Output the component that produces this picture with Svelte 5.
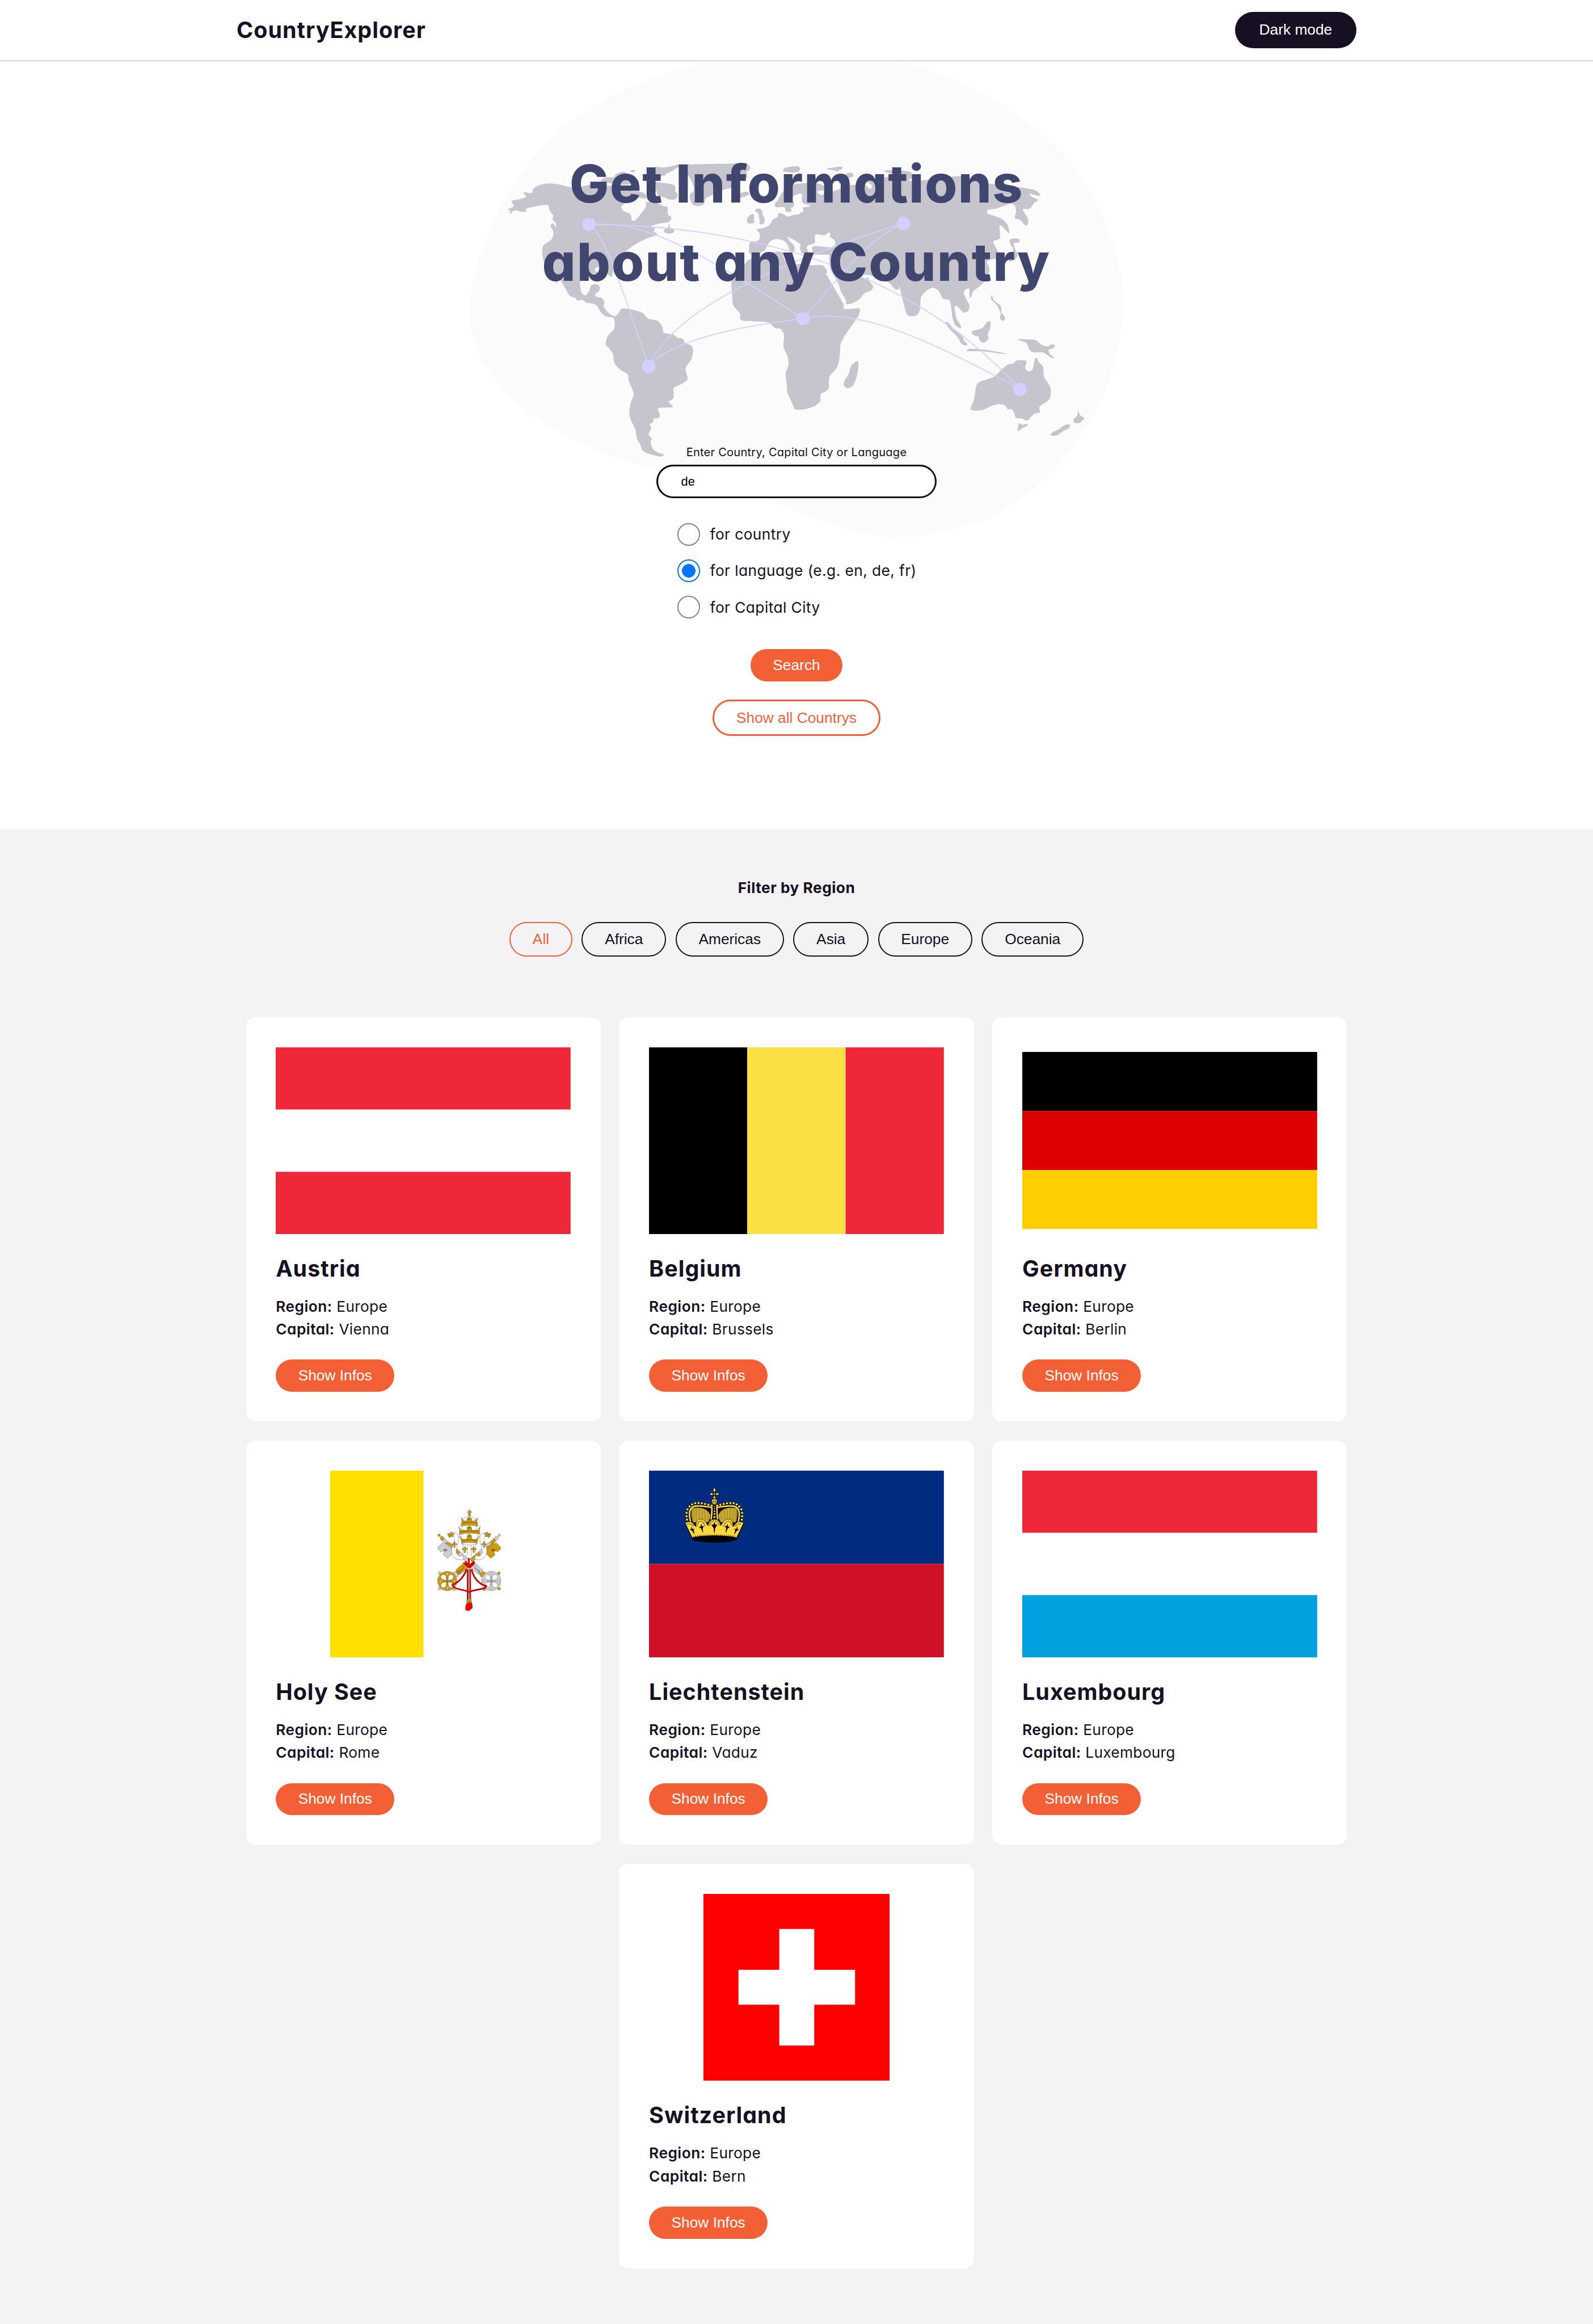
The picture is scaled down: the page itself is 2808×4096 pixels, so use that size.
<script>
  const countries = [
    { name: 'Austria', capital: 'Vienna', flag: { w: 316, h: 200, dir: 'rows', stripes: ['#ee2839', '#ffffff', '#ee2839'] } },
    { name: 'Belgium', capital: 'Brussels', flag: { w: 316, h: 200, dir: 'cols', stripes: ['#000000', '#fae042', '#ee2839'] } },
    { name: 'Germany', capital: 'Berlin', flag: { w: 316, h: 190, dir: 'rows', stripes: ['#000000', '#dd0000', '#ffce00'] } },
    { name: 'Holy See', capital: 'Rome', flag: { kind: 'vatican' } },
    { name: 'Liechtenstein', capital: 'Vaduz', flag: { kind: 'liechtenstein' } },
    { name: 'Luxembourg', capital: 'Luxembourg', flag: { w: 316, h: 200, dir: 'rows', stripes: ['#ee2839', '#ffffff', '#00a1de'] } },
    { name: 'Switzerland', capital: 'Bern', flag: { kind: 'swiss' } }
  ];
  const regions = ['All', 'Africa', 'Americas', 'Asia', 'Europe', 'Oceania'];
  const modes = ['for country', 'for language (e.g. en, de, fr)', 'for Capital City'];

  let region = $state('All');
  let mode = $state(modes[1]);
  let query = $state('de');

  // Parses "x,y x,y ..." and moves the points by (dx, dy) after scaling.
  function pts(text, dx = 0, dy = 0, sx = 1, sy = 1) {
    return text.trim().split(/\s+/).map((p) => {
      const [x, y] = p.split(',').map(Number);
      return [x * sx + dx, y * sy + dy];
    });
  }
  // Closed, softly rounded outline through the points.
  function smooth(p, k = 0.14) {
    const n = p.length;
    let d = `M${p[0][0].toFixed(1)} ${p[0][1].toFixed(1)}`;
    for (let i = 0; i < n; i++) {
      const a = p[(i + n - 1) % n], b = p[i], c = p[(i + 1) % n], e = p[(i + 2) % n];
      const v = [b[0] + (c[0] - a[0]) * k, b[1] + (c[1] - a[1]) * k, c[0] - (e[0] - b[0]) * k, c[1] - (e[1] - b[1]) * k, c[0], c[1]];
      d += 'C' + v.map((q) => q.toFixed(1)).join(' ');
    }
    return d + 'Z';
  }
  const west = (t) => pts(t);
  const east = (t) => pts(t, 1475.8, 0);
  const europe = (t) => pts(t, 1106.8, 345, 0.6149, 0.5227);

  const land = [
    west('231,572 257,560 246,541 280,534 311,525 300,508 337,510 342,496 365,482 410,474 460,478 515,489 560,485 600,478 640,482 700,484 770,492 838,512 842,530 800,530 750,550 735,562 745,578 776,590 782,614 800,611 830,580 845,560 845,545 880,545 925,560 940,563 942,590 958,603 945,620 915,624 870,634 885,642 880,655 895,668 845,683 790,708 740,742 708,775 700,800 697,815 690,828 672,815 658,793 640,789 622,793 618,804 640,815 600,815 560,822 551,850 557,885 575,897 592,880 600,860 625,855 640,868 634,882 618,893 625,902 650,908 660,925 656,940 680,965 705,976 722,965 735,948 765,948 825,962 855,985 895,993 915,1012 925,1038 965,1045 985,1058 1010,1062 1018,1078 1045,1086 1054,1105 1046,1140 1022,1168 1022,1185 1029,1215 1000,1233 968,1247 968,1265 966,1285 945,1300 955,1308 962,1320 900,1324 907,1350 898,1361 878,1363 876,1376 861,1385 868,1400 856,1423 870,1438 865,1455 878,1480 900,1492 923,1498 912,1507 860,1497 830,1484 822,1467 803,1435 798,1405 777,1368 770,1340 776,1305 790,1272 785,1255 768,1220 762,1195 725,1175 703,1150 698,1120 680,1097 665,1082 675,1050 700,1027 705,1005 700,982 665,976 645,962 625,935 610,929 580,925 565,915 540,916 530,907 505,898 480,862 462,838 445,835 447,852 420,815 395,780 384,745 386,712 410,695 428,680 432,655 420,635 430,625 445,638 443,624 430,610 432,595 415,575 410,557 380,557 315,568 312,580 290,581 270,577 252,579 240,591 240,578'),
    west('645,465 665,452 700,450 712,438 745,430 765,445 776,475 730,478'),
    west('775,427 785,423 798,425 786,432'),
    west('868,470 905,470 970,480 975,503 985,515 978,532 950,535 920,525 900,520 888,500 868,500'),
    west('868,420 890,411 925,414 960,408 1000,401 1040,402 1035,409 990,412 965,425 935,437 925,445 880,448'),
    west('1040,405 1060,402 1160,400 1260,398 1295,401 1308,412 1303,424 1292,430 1295,450 1262,460 1252,480 1240,487 1190,498 1125,523 1110,530 1102,552 1080,559 1055,555 1043,540 1040,515 1058,500 1050,470 1030,442 1000,435 1010,415'),
    west('948,624 952,640 970,650 966,660 945,664 926,658 926,648 942,640'),
    europe('215,362 232,335 275,310 310,308 320,325 290,342 250,352'),
    europe('320,750 318,720 322,685 335,667 380,662 398,635 392,602 375,585 380,575 430,567 470,545 485,515 495,505 525,490 533,462 560,465 600,486 640,474 680,470 697,453 712,453 710,422 735,418 765,408 710,390 700,365 700,322 670,325 620,352 645,385 640,415 622,425 625,448 585,450 575,420 515,418 505,395 530,365 560,310 610,268 660,250 760,243 835,252 880,290 812,305 840,330 900,310 930,303 970,288 1000,270 1060,257 1120,258 1165,262 1190,285 1207,275 1200,250 1170,232 1250,208 1340,200 1450,215')
      .concat(east('555,466 620,460 700,452 740,447 790,448 820,457 900,475 960,478 1000,485 1090,497 1118,512 1118,521 1075,513 1085,524 1112,535 1105,543 1095,548 1075,570 1045,572 1068,608 1066,628 1055,632 1035,613 1010,605 1015,580 1010,560 995,550 970,556 930,568 890,574 888,588 920,597 950,607 978,632 984,662 965,647 942,632 943,680 915,692 918,705 930,725 940,755 910,760 885,770 897,800 880,838 850,865 825,880 815,903 808,903 807,872 790,875 783,892 805,930 806,950 790,962 775,958 758,942 742,940 750,985 768,1010 768,1022 745,1010 732,980 725,935 717,914 690,910 670,880 645,868 615,880 592,905 588,945 578,968 555,976 530,970 518,940 497,866 492,876 475,872 450,850 400,830 345,818 328,828 345,835 358,828 360,842 378,860 372,877 340,890 320,910 290,926 260,930 258,915 235,882 228,860 210,830 190,800 185,770 184,748 175,743 110,743'))
      .concat(europe('790,758 778,730 775,708 800,700 880,707 925,705 943,675 935,655 905,632 908,608 895,602 862,622 815,614 797,622 795,645 797,668 785,682 745,695 738,718 748,742 730,760 702,752 688,720 690,688 660,665 600,633 610,660 640,690 650,720 640,745 615,735 600,695 570,662 530,650 490,655 460,680 440,720 410,745 360,752')),
    europe('193,940 240,890 305,810 345,788 430,770 520,740 560,748 570,785 590,815 640,832 700,828 760,838 845,838 872,860 888,897 873,895 905,950 1000,1115 1000,1140 1012,1155 1070,1153 1110,1148 1121,1165 1110,1205')
      .concat(east('300,993 262,1038 235,1080 230,1130 218,1170 188,1200 182,1225 182,1248 168,1260 146,1270 144,1295 120,1315 70,1328 32,1328 22,1310 -2,1265 -5,1235'))
      .concat(west('1466,1195 1478,1160 1475,1130 1456,1090 1459,1050 1445,1025 1418,1021 1390,1000 1330,995 1268,991 1262,965 1233,935 1228,900')),
    east('305,1146 314,1153 310,1190 300,1220 285,1242 262,1247 248,1235 255,1215 270,1195 280,1165 295,1152'),
    europe('345,468 357,474 352,488 360,498 353,508 357,522 350,534 315,536 305,522 310,495 325,475'),
    europe('366,434 385,428 408,435 415,455 417,475 431,495 430,520 422,540 405,543 392,535 397,518 392,500 390,480 387,465 368,452'),
    europe('565,150 580,135 620,125 675,123 688,140 680,158 640,167 575,162'),
    europe('878,142 920,133 980,124 997,130 985,145 970,150 960,161 935,152'),
    europe('965,238 1000,200 1020,178 1055,168 1075,182 1065,200 1040,206 1010,215 985,247'),
    europe('1300,153 1400,153 1480,162 1503,185 1485,215 1450,220 1400,190 1330,172'),
    east('700,1002 712,999 740,1025 772,1045 785,1070 799,1080 790,1087 770,1078 755,1055 720,1025'),
    east('818,1033 835,1028 865,1020 885,998 900,996 900,1020 889,1045 892,1062 870,1076 852,1065 848,1053 825,1047'),
    east('798,1102 815,1099 880,1103 967,1117 960,1119 880,1109 803,1108'),
    east('908,895 915,915 935,928 948,940 950,960 966,980 962,991 950,992 943,980 946,965 930,935 904,912'),
    east('1022,1063 1060,1063 1100,1066 1130,1085 1155,1090 1175,1082 1187,1088 1180,1097 1160,1103 1165,1118 1186,1134 1170,1132 1135,1113 1090,1112 1072,1098 1062,1078'),
    east('986,688 1005,682 1030,685 1026,697 1005,700 1010,720 1022,740 1015,758 985,770 990,745 1003,725 988,700'),
    east('813,1328 828,1290 838,1240 855,1223 915,1205 945,1182 975,1160 1000,1155 1020,1143 1055,1143 1061,1152 1055,1172 1070,1184 1088,1177 1098,1140 1107,1133 1115,1148 1135,1168 1140,1205 1165,1240 1170,1265 1160,1292 1120,1318 1121,1340 1095,1345 1065,1370 1040,1362 1015,1360 1005,1340 995,1328 978,1327 965,1313 940,1308 905,1315 860,1332'),
    east('1028,1380 1042,1386 1065,1383 1062,1392 1045,1398 1022,1410'),
    east('1290,1331 1300,1350 1318,1362 1308,1370 1300,1379 1275,1379 1270,1368 1288,1350'),
    east('1250,1385 1253,1397 1225,1410 1195,1427 1168,1425 1180,1413 1200,1406 1230,1388')
  ].map((p) => smooth(p));

  const blob = smooth(pts('62,975 75,850 115,730 190,575 300,425 400,320 520,235 720,132 930,60 1140,8 1400,-45 1700,-45 1976,10 2230,85 2476,200 2676,345 2800,470 2876,600 2945,760 2967,960 2915,1192 2815,1380 2650,1565 2426,1714 2232,1777 1990,1811 1800,1795 1650,1756 1372,1665 1130,1598 873,1550 690,1502 524,1443 370,1368 240,1280 130,1165 80,1065'), 0.167);

  const routes = [
    'M590 629C650 640 760 920 856 1166',
    'M590 629C800 615 1000 680 1543 985',
    'M590 629C1200 630 1990 760 2508 1252',
    'M856 1166C960 960 1400 780 1989 625',
    'M856 1166C960 1060 1300 1010 1543 985',
    'M1543 985C1700 840 1800 700 1989 625',
    'M1543 985C1780 940 2100 1060 2508 1252'
  ];
  const cities = [[590, 629], [856, 1166], [1543, 985], [1989, 625], [2508, 1252]];

  const keys = [
    { id: 'gold', turn: 'translate(782 0) scale(-1 1)' },
    { id: 'silver', turn: '' }
  ];
  const ropes = [
    'M380 545V765', 'M398 545V765', 'M388 465V520L362 488M390 520L428 488M350 498L392 535L430 500',
    'M372 545C350 610 300 650 270 655C270 690 340 690 390 708C440 690 515 690 515 665C470 660 420 610 408 545'
  ];
  // Left half of the princely crown's pearls; the right half is its mirror.
  const pearls = [[110, 306], [107, 282], [107, 257], [113, 232], [128, 211], [147, 196], [169, 187], [193, 186], [217, 188], [241, 193], [265, 199], [288, 205]];
  const bars = [148, 158, 168, 179, 190, 201, 212, 223, 234, 245, 256, 267];
</script>

{#snippet pips()}
  {#each pearls as [x, y]}<circle cx={x} cy={y} r="9.5" />{/each}
{/snippet}

<header>
  <div class="bar">
    <div class="logo">CountryExplorer</div>
    <button class="btn dark">Dark mode</button>
  </div>
</header>

<main>
  <section class="hero">
    <svg class="world" viewBox="0 10 3043.7 1871.6" preserveAspectRatio="none" aria-hidden="true">
      <path class="blob" d={blob} />
      {#each land as d}<path class="land" {d} />{/each}
      {#each routes as d}<path class="route" {d} />{/each}
      {#each cities as [x, y]}<ellipse class="city" cx={x} cy={y} rx="29.5" ry="25" />{/each}
    </svg>

    <h1><span class="l1">Get Informations</span><br /><span class="l2">about any Country</span></h1>

    <label class="hint" for="query">Enter Country, Capital City or Language</label>
    <input id="query" class="query" type="text" bind:value={query} />

    <div class="modes">
      {#each modes as m}
        <label class="mode">
          <input type="radio" name="mode" value={m} bind:group={mode} />
          <span>{m}</span>
        </label>
      {/each}
    </div>

    <button class="btn solid">Search</button>
    <button class="btn ghost">Show all Countrys</button>
  </section>

  <section class="results">
    <h2>Filter by Region</h2>
    <div class="pills">
      {#each regions as r}
        <button class="pill" class:active={region === r} onclick={() => (region = r)}>{r}</button>
      {/each}
    </div>

    <div class="cards">
      {#each countries as c}
        <article class="card">
          <div class="flag">
            {#if c.flag.stripes}
              <svg viewBox="0 0 {c.flag.w} {c.flag.h}" class:short={c.flag.h === 190} preserveAspectRatio="none">
                {#each c.flag.stripes as fill, i}
                  {#if c.flag.dir === 'rows'}
                    <rect x="0" y={(i * c.flag.h) / 3} width={c.flag.w} height={c.flag.h / 3} {fill} />
                  {:else}
                    <rect x={(i * c.flag.w) / 3} y="0" width={c.flag.w / 3} height={c.flag.h} {fill} />
                  {/if}
                {/each}
              </svg>
            {:else if c.flag.kind === 'swiss'}
              <svg class="square" viewBox="0 0 32 32">
                <rect width="32" height="32" fill="#ff0000" />
                <path d="M13 6h6v7h7v6h-7v7h-6v-7H6v-6h7z" fill="#fff" />
              </svg>
            {:else if c.flag.kind === 'liechtenstein'}
              <svg viewBox="-165 -48 2133 1350" preserveAspectRatio="none">
                <rect x="-165" y="-48" width="2133" height="675" fill="#002b7f" />
                <rect x="-165" y="627" width="2133" height="675" fill="#ce1126" />
                <g class="crown">
                  <path class="ink" d="M95 332L125 320C120 260 130 215 185 202C240 195 285 215 308 205C330 215 380 195 430 202C490 215 498 260 492 320L522 332L472 440C470 480 150 480 145 440Z" />
                  {@render pips()}
                  <g transform="translate(616 0) scale(-1 1)">{@render pips()}</g>
                  <path class="cap" d="M145 225C190 212 250 215 278 268C280 290 275 310 262 326H152C138 290 138 250 145 225ZM471 225C426 212 366 215 338 268C336 290 341 310 354 326H464C478 290 478 250 471 225Z" />
                  <g class="rib">
                    {#each bars as x}<path d="M{x} 218V322M{616 - x} 218V322" />{/each}
                  </g>
                  <path class="ink" d="M225 215C262 222 278 245 286 270V222ZM391 215C354 222 338 245 330 270V222Z" />
                  <path class="arch" d="M135 322C122 260 125 222 165 210C210 200 262 216 290 218C290 260 288 285 284 306M481 322C494 260 491 222 451 210C406 200 354 216 326 218C326 260 328 285 332 306" />
                  <path class="ink" d="M298 214h20v92h-20z" />
                  {#each [211, 226, 245, 265, 288] as y, i}<circle cx="308" cy={y} r={5.5 + i} />{/each}
                  <path d="M96 330C118 316 146 318 160 342L175 358C170 320 188 300 208 302C232 302 246 325 262 350C266 318 284 304 308 304C332 304 350 318 354 350C370 325 384 302 408 302C428 300 446 320 441 358L456 342C470 318 498 316 520 330L468 438C440 420 176 420 148 438Z" />
                  <ellipse class="ink" cx="308" cy="446" rx="161" ry="25" />
                  <path class="fringe" d="M156 430C220 416 396 416 460 430" />
                  <path class="studs" d="M112 338Q140 332 158 356M184 352Q186 316 210 318Q230 320 240 356M274 348Q276 318 308 316Q340 318 342 348M376 356Q386 320 406 318Q430 316 432 352M458 356Q476 332 504 338" />
                  <path class="ink" d="M308 326L314 345L328 342L320 356L312 368L308 402L304 368L296 356L288 342L302 345ZM214 340L218 356L230 354L222 368L224 398L214 370L198 360L210 357ZM402 340L398 356L386 354L394 368L392 398L402 370L418 360L406 357ZM144 360L148 376L161 374L156 386L163 410L148 388L132 376L142 376ZM472 360L468 376L455 374L460 386L453 410L468 388L484 376L474 376Z" />
                  <circle cx="308" cy="175" r="21" />
                  <path class="line" d="M288 176H328M288 184H328M302 156V174M314 156V174" />
                  <path d="M308 72L318 93L308 113L298 93ZM270 121L289 111L301 121L289 131ZM346 121L327 111L315 121L327 131ZM308 128L320 153H296Z" />
                  <circle cx="308" cy="121" r="7" />
                </g>
              </svg>
            {:else}
              <svg class="square" viewBox="-615 -168 1350 1350">
                <rect x="-615" y="-168" width="676" height="1350" fill="#ffe000" />
                <rect x="61" y="-168" width="674" height="1350" fill="#fff" />
                <g class="arms">
                  <path class="white" d="M345 365C352 420 345 455 318 475C340 480 375 462 378 430V368ZM437 365C430 420 437 455 464 475C442 480 407 462 404 430V368Z" />
                  {#each keys as k}
                    <g class={k.id} transform={k.turn}>
                      <path class="main" d="M198 352L165 385V400L180 408L184 420L200 412L212 424L204 440L235 466L264 437V396L222 350L212 362Z" />
                      <path class="mark" d="M218 392V420M205 398Q205 412 218 406Q231 412 231 398M206 408H230" />
                      <path class="main" d="M212 322L272 378L255 396L197 338Z" />
                      <path class="alt" d="M180 312L198 306L212 322L197 340L184 330ZM217 352L258 356L276 380L262 384L236 366ZM290 398L304 398L328 424V438L312 440L288 412Z" />
                      <circle class="alt" cx="173" cy="299" r="9" />
                      <path class="main" d="M322 420L386 470L372 494L310 440Z" />
                      <path class="main" d="M404 520L432 500L484 546Q492 556 482 574Q470 588 458 582L404 538Z" />
                      <path class="mark" d="M425 520Q440 530 436 545Q450 540 452 556Q470 548 466 566M470 560a8 8 0 1 0 6 8" />
                      <path class="alt" d="M488 562L506 566L505 580L484 600L470 596L472 582Z" />
                      <circle class="alt" cx="605" cy="574" r="10" />
                      <circle class="alt" cx="607" cy="686" r="10" />
                      <circle class="alt" cx="500" cy="690" r="10" />
                      <circle class="main" cx="550" cy="630" r="70" />
                      <path class="white" d="M545 626C505 625 495 595 515 585C538 578 546 600 545 626ZM555 626C554 600 562 578 585 585C608 595 595 625 555 626ZM555 636C595 637 608 665 585 677C562 684 554 660 555 636ZM545 636C546 660 538 684 515 677C492 665 505 637 545 636ZM538 574H562L550 588ZM538 686H562L550 674ZM494 620V642L507 631ZM606 620V642L593 631Z" />
                      <path class="ink" d="M550 600V660M520 631H580" />
                      <circle class="main" cx="550" cy="612" r="8" />
                      <circle class="main" cx="550" cy="649" r="8" />
                      <circle class="main" cx="531" cy="631" r="8" />
                      <circle class="main" cx="569" cy="631" r="8" />
                    </g>
                  {/each}
                  {#each keys as k}
                    <g transform={k.turn} class="gold">
                      <path class="white" d="M240 290C262 268 312 275 314 320C316 360 290 400 298 430C304 458 330 455 344 440L352 470C330 484 285 478 268 440C250 396 290 350 285 318C278 300 262 300 252 312Z" />
                      <path class="main" d="M233 290L246 284L260 308L246 317ZM258 278h10v8h14v10h-10l2 14h-10l-2-12-10 2-2-10 9-3ZM280 346h9v14h12v9h-12v19h-9v-19h-12v-9h12ZM355 382h9v12h12v9h-12v22h-9v-22h-14v-9h14Z" />
                    </g>
                  {/each}
                  <g class="gold">
                    <path class="white" d="M346 200C346 150 438 150 438 200L452 300L447 366Q391 374 337 366L332 300Z" />
                    <path class="main" d="M335 172L350 192L362 196L372 196Q378 180 392 168Q406 180 412 196L424 196L436 192L450 172L447 200L454 234Q391 218 330 234L338 200Z" />
                    <path class="main" d="M315 235L330 262L348 262Q360 262 372 264Q378 244 392 232Q406 244 412 264L438 262L454 262L470 235L465 268L468 292Q391 276 318 294L322 268Z" />
                    <path class="main" d="M317 302L336 324L352 330L372 328Q378 308 392 292Q406 308 412 328L434 330L448 324L467 302L452 330L446 358Q391 344 338 358L332 330Z" />
                    <path class="mark" d="M336 212Q391 198 448 212M322 274Q391 262 464 274M336 340Q391 326 448 340" />
                    {#each [182, 246, 306] as y}
                      <circle class="main" cx="392" cy={y - 8} r="7" />
                      <circle class="main" cx="382" cy={y} r="7" />
                      <circle class="main" cx="402" cy={y} r="7" />
                    {/each}
                    <circle class="main" cx="392" cy="150" r="9" />
                    <path class="main" d="M389 115h7v12h12v8h-12v8h-7v-8h-11v-8h11Z" />
                  </g>
                  {#each ropes as d}
                    <path class="rope-edge" {d} />
                    <path class="rope" {d} />
                  {/each}
                  <g class="gold">
                    <path class="main" d="M374 766H387L390 788H372ZM392 758H405L408 784H390Z" />
                  </g>
                  <path class="tassel" d="M390 786H408Q418 810 412 830Q400 836 392 830Z" />
                  <path class="tassel" d="M373 790H390Q402 815 398 840Q382 850 365 840Q360 815 373 790Z" />
                </g>
              </svg>
            {/if}
          </div>
          <h3>{c.name}</h3>
          <p><b>Region:</b> Europe</p>
          <p><b>Capital:</b> {c.capital}</p>
          <button class="btn solid">Show Infos</button>
        </article>
      {/each}
    </div>
  </section>
</main>

<style>
  :global(html) {
    font-size: 16.449px;
  }
  :global(body) {
    margin: 0;
    background: #fff;
    color: #170f22;
    font-family: Inter, 'Open Sans', sans-serif;
    font-feature-settings: 'cv11' 1;
  }
  header {
    box-sizing: border-box;
    height: 6.54rem;
    border-bottom: 0.13rem solid #d6d6e6;
    background: #fff;
    position: relative;
    z-index: 1;
  }
  .bar {
    width: 120rem;
    height: 100%;
    margin: 0 auto;
    display: flex;
    align-items: center;
    justify-content: space-between;
  }
  .logo {
    font-size: 2.4rem;
    font-weight: 700;
    letter-spacing: 0.025em;
  }
  .btn {
    box-sizing: border-box;
    height: 3.46rem;
    padding: 0 2.4rem;
    border: 0;
    border-radius: 2rem;
    font: 400 1.6rem 'Liberation Sans', Arial, sans-serif;
    white-space: nowrap;
  }
  .dark {
    height: 3.86rem;
    padding: 0 2.6rem;
    background: #170f22;
    color: #fff;
  }
  .solid {
    background: #f46036;
    color: #fff;
  }
  .ghost {
    height: 3.87rem;
    margin-top: 1.98rem;
    border: 0.19rem solid #f46036;
    background: #fff;
    color: #f46036;
  }
  .hero {
    position: relative;
    box-sizing: border-box;
    height: 82.26rem;
    padding-top: 8.96rem;
    display: flex;
    flex-direction: column;
    align-items: center;
  }
  .hero > :not(.world) {
    position: relative;
  }
  .world {
    position: absolute;
    top: -0.04rem;
    left: 48.89rem;
    width: 73.33rem;
    height: 53.05rem;
  }
  .blob {
    fill: #fbfbfb;
  }
  .land {
    fill: #c6c4cd;
  }
  .route {
    fill: none;
    stroke: #d3d1ff;
    stroke-width: 4.5;
    opacity: 0.9;
  }
  .city {
    fill: #d2d0ff;
  }
  h1 {
    margin: 0;
    text-align: center;
    font-size: 5.6rem;
    line-height: 8.4rem;
    font-weight: 800;
    color: #41466f;
  }
  .l1 {
    letter-spacing: 0.02em;
  }
  .l2 {
    letter-spacing: 0.026em;
  }
  .hint {
    margin-top: 15.3rem;
    font-size: 1.22rem;
    line-height: 1.8rem;
    letter-spacing: 0.012em;
  }
  .query {
    box-sizing: border-box;
    width: 30rem;
    height: 3.54rem;
    margin-top: 0.42rem;
    padding: 0 2.45rem;
    border: 0.19rem solid;
    border-color: #000 #170f22 #170f22 #000;
    border-radius: 1.8rem;
    background: #fff;
    color: #000;
    outline: none;
    font: 400 1.333rem 'Liberation Sans', Arial, sans-serif;
  }
  .modes {
    width: 25.5rem;
    margin-top: 2.7rem;
    display: flex;
    flex-direction: column;
    gap: 1.5rem;
  }
  .mode {
    display: flex;
    align-items: center;
    gap: 1.08rem;
    height: 2.4rem;
    font-size: 1.6rem;
    letter-spacing: 0.016em;
    white-space: nowrap;
  }
  .mode input {
    appearance: none;
    box-sizing: border-box;
    flex: none;
    width: 2.4rem;
    height: 2.4rem;
    margin: 0;
    border: 0.125rem solid #858585;
    border-radius: 50%;
    background: #fff;
  }
  .mode input:checked {
    border-color: #0075ff;
    background: radial-gradient(circle, #0075ff 0 0.7rem, #fff 0.75rem);
  }
  .hero > .solid {
    margin-top: 3.28rem;
  }
  .results {
    box-sizing: border-box;
    height: 160.22rem;
    padding-top: 5.12rem;
    background: #f3f3f3;
    display: flex;
    flex-direction: column;
    align-items: center;
  }
  h2 {
    margin: 0;
    font-size: 1.6rem;
    line-height: 2.4rem;
    letter-spacing: 0.018em;
  }
  .pills {
    display: flex;
    gap: 1rem;
    margin-top: 2.48rem;
  }
  .pill {
    box-sizing: border-box;
    height: 3.68rem;
    padding: 0 2.36rem;
    border: 0.125rem solid #170f22;
    border-radius: 2rem;
    background: none;
    color: #170f22;
    font: 400 1.6rem 'Liberation Sans', Arial, sans-serif;
  }
  .pill.active {
    border-color: #f46036;
    color: #f46036;
  }
  .cards {
    width: 120rem;
    margin-top: 6.53rem;
    display: flex;
    flex-wrap: wrap;
    justify-content: center;
    gap: 2.06rem 2rem;
  }
  .card {
    box-sizing: border-box;
    width: 38rem;
    height: 43.3rem;
    padding: 3.2rem;
    border-radius: 1rem;
    background: #fff;
  }
  .flag {
    height: 20rem;
    display: flex;
    align-items: center;
    justify-content: center;
  }
  .flag svg {
    width: 31.6rem;
    height: 20rem;
  }
  .flag .short {
    height: 19rem;
  }
  .flag .square {
    width: 20rem;
  }
  h3 {
    margin: 1.97rem 0 1.03rem;
    font-size: 2.4rem;
    line-height: 3.6rem;
    letter-spacing: 0.025em;
  }
  p {
    margin: 0;
    font-size: 1.6rem;
    line-height: 2.44rem;
    letter-spacing: 0.011em;
  }
  p b {
    font-weight: 600;
    letter-spacing: 0.018em;
  }
  .card .btn {
    display: block;
    margin-top: 2rem;
  }
  .crown path,
  .crown circle {
    fill: #ffd83d;
    stroke: #000;
    stroke-width: 3;
  }
  .crown .ink {
    fill: #000;
  }
  .crown .cap {
    fill: #ffd83d;
  }
  .crown .rib path {
    stroke: #3a3000;
    stroke-width: 3.5;
  }
  .crown .arch {
    fill: none;
    stroke: #ffd83d;
    stroke-width: 11;
  }
  .crown .line {
    fill: none;
    stroke-width: 2.5;
  }
  .crown .fringe {
    fill: none;
    stroke-width: 14;
    stroke-dasharray: 3 11;
  }
  .crown .studs {
    fill: none;
    stroke-width: 9;
    stroke-dasharray: 3 6;
  }
  .arms path,
  .arms circle {
    stroke: #2b2b2b;
    stroke-width: 1.6;
    stroke-linejoin: round;
  }
  .arms .white {
    fill: #fff;
  }
  .gold .main,
  .silver .alt {
    fill: #ce9d09;
  }
  .gold .alt,
  .silver .main {
    fill: #cfcfcf;
  }
  .arms .mark {
    fill: none;
    stroke-width: 2.6;
  }
  .arms .ink {
    fill: none;
  }
  .arms .rope-edge {
    fill: none;
    stroke: #4a0000;
    stroke-width: 11;
  }
  .arms .rope {
    fill: none;
    stroke: #f00;
    stroke-width: 9;
    stroke-dasharray: 7 1.6;
  }
  .arms .tassel {
    fill: #f00;
  }
</style>
